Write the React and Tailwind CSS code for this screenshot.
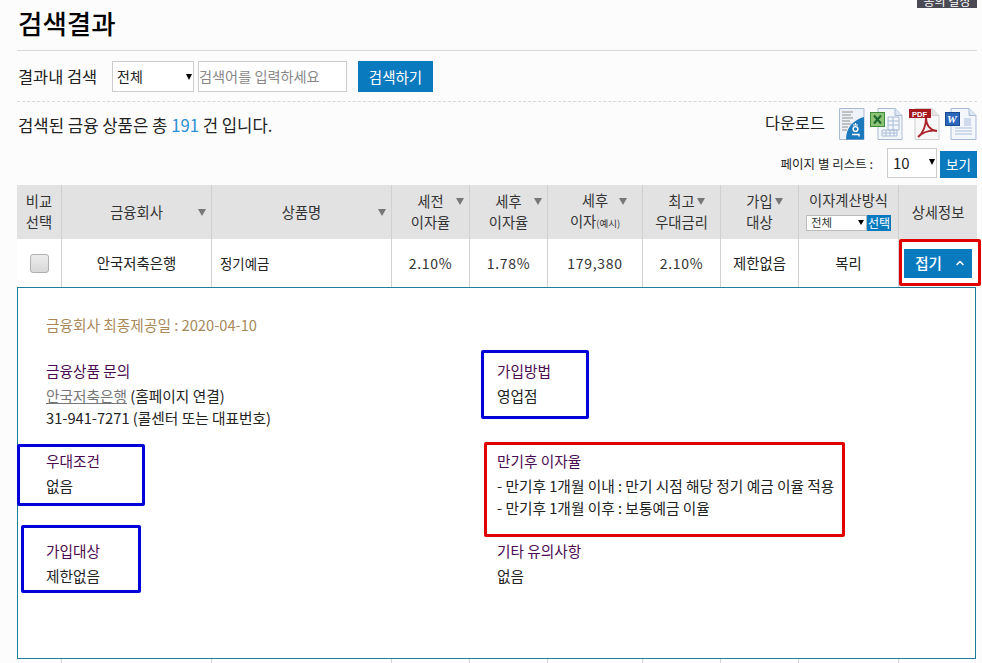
import { ChevronUp } from "lucide-react";

const cols = "grid-cols-[45px_150px_180px_78px_78px_95px_78px_78px_100px_78px]";

const SortArrow = ({ className = "" }) => (
  <span className={`inline-block w-0 h-0 border-x-[4px] border-x-transparent border-t-[7px] border-t-[#777] ${className}`} />
);

const HwpIcon = () => (
  <svg width="26" height="32" viewBox="0 0 26 32">
    <path d="M.5.5h24.5v31H.5z" fill="#eef2f8" stroke="#a9bbd4" />
    <path d="M3 4h11M3 7h9M3 10h11M3 13h8M3 16h9M3 19h6M3 22h5" stroke="#b0b0b0" strokeWidth="1.4" />
    <path d="M25 9v22.5H7C7 20 14 12 25 9z" fill="#1d79bd" />
    <path d="M14 17h5M16.5 15v2" stroke="#fff" strokeWidth="1.2" />
    <circle cx="16.5" cy="21" r="2.4" fill="none" stroke="#fff" strokeWidth="1.4" />
    <path d="M13 26.5h7v2" fill="none" stroke="#fff" strokeWidth="1.4" />
  </svg>
);

const XlsIcon = () => (
  <svg width="33" height="32" viewBox="0 0 33 32">
    <path d="M8 .5h17l7 7v24H8z" fill="#f3f6fb" stroke="#a9bbd4" />
    <path d="M25 .5v7h7" fill="#dbe5f3" stroke="#a9bbd4" />
    <path d="M12 22h15v6H12zM12 25h15M16 22v6M20 22v6M24 22v6M18 9h11v13H18zM18 13h11M18 17h11M23 9v13" fill="none" stroke="#a9bcd6" />
    <rect x=".5" y="4.5" width="14" height="14" fill="#8cc377" stroke="#3f8a3a" />
    <path d="M4 7.5l7 8M11 7.5l-7 8" stroke="#1f6a2c" strokeWidth="2.2" />
  </svg>
);

const PdfIcon = () => (
  <svg width="31" height="32" viewBox="0 0 31 32">
    <path d="M6 .5h17l7 7v24H6z" fill="#f8f8f8" stroke="#cfcfcf" />
    <path d="M23 .5v7h7" fill="#e4e4e4" stroke="#cfcfcf" />
    <path d="M9 29c5-4 8-12 8-20 0 7 3 13 11 14-7-1-14 1-19 6z" fill="none" stroke="#a8232a" strokeWidth="1.8" />
    <rect x="0" y="1" width="22" height="9" fill="#a5191f" />
    <text x="3" y="8.5" fontSize="7.5" fontWeight="700" fill="#fff" fontFamily="Liberation Sans, sans-serif">PDF</text>
  </svg>
);

const DocIcon = () => (
  <svg width="32" height="32" viewBox="0 0 32 32">
    <path d="M6 .5h18l7 7v24H6z" fill="#f3f6fb" stroke="#a9bbd4" />
    <path d="M24 .5v7h7" fill="#dbe5f3" stroke="#a9bbd4" />
    <path d="M19 10h7v8h-7z" fill="#cfdbec" />
    <path d="M10 20h17M10 23h17M10 26h17" stroke="#a9bfdc" />
    <rect x=".5" y="4.5" width="14" height="13" fill="#2b66bd" stroke="#1c4a90" />
    <text x="2" y="15" fontSize="11" fontWeight="700" fontStyle="italic" fill="#fff" fontFamily="Liberation Serif, serif">W</text>
  </svg>
);

const HeadCell = ({ children, arrow, arrowClass = "" }) => (
  <div className="relative flex items-center justify-center pb-[2px] text-center border-r border-[#d0d0d0] last:border-r-0 leading-[21px]">
    {children}
    {arrow && <SortArrow className={`absolute ${arrowClass}`} />}
  </div>
);

const Cell = ({ children, className = "" }) => (
  <div className={`flex items-center justify-center border-r border-[#d0d0d0] last:border-r-0 ${className}`}>
    {children}
  </div>
);

const Block = ({ title, children }) => (
  <div className="h-[90px]">
    <div className="h-[25px] leading-[27px] text-[#4b0b52]">{title}</div>
    <div className="leading-[21.5px] text-[#222] pt-[3px]">{children}</div>
  </div>
);

export default function App() {
  return (
    <div className="relative h-[663px] overflow-hidden bg-[#fcfcfc] pl-[17px] pr-[5px] text-[14px] text-[#222] font-['Noto_Sans_CJK_KR','Noto_Sans',sans-serif]">
      {/* top badge, cut by the window */}
      <div className="absolute right-[5px] top-0 h-[8px] w-[60px] overflow-hidden bg-[#4a4a55] text-center text-[12px] leading-[2px] text-white">
        동의 결정
      </div>

      <h1 className="h-[51px] border-b border-[#d8d8d8] pt-[4px] pl-[1px] text-[26.5px] font-medium leading-[38px] text-black">검색결과</h1>

      {/* search */}
      <div className="flex h-[51px] items-center border-b border-dashed border-[#d8d8d8] pt-[2px] pb-[1px] pl-[1px]">
        <span className="mr-[15px] w-[79px] text-[16.4px] whitespace-nowrap">결과내 검색</span>
        <div className="relative mr-[4px] flex h-[31px] w-[82px] items-center border border-[#ccc] bg-white pl-[4px] text-[14px]">
          전체
          <span className="absolute right-[1px] top-[12px] h-0 w-0 border-x-[3.5px] border-t-[6px] border-x-transparent border-t-black" />
        </div>
        <div className="flex h-[31px] w-[149px] items-center border border-[#ccc] bg-white text-[14.2px] text-[#888]">
          검색어를 입력하세요
        </div>
        <button className="ml-[11px] h-[31px] w-[75px] bg-[#0a7abf] text-[14.5px] text-white">검색하기</button>
      </div>

      {/* result count + downloads */}
      <div className="flex h-[42px] items-center justify-between">
        <div className="pt-[6px] pl-[1px] text-[16.7px]">
          검색된 금융 상품은 총 <span className="text-[#2a8fd6]">191</span> 건 입니다.
        </div>
        <div className="flex items-center">
          <span className="mr-[14px] mb-[2px] text-[16.3px]">다운로드</span>
          <div className="flex items-center pt-[2px]">
            <HwpIcon />
            <span className="w-[5px]" />
            <XlsIcon />
            <span className="w-[6px]" />
            <PdfIcon />
            <span className="w-[5px]" />
            <DocIcon />
          </div>
        </div>
      </div>

      {/* page size */}
      <div className="flex h-[41px] items-center justify-end pt-[4px] pb-[7px]">
        <span className="mr-[14px] mt-[3px] text-[12.5px]">페이지 별 리스트 :</span>
        <div className="relative mr-[3px] flex h-[30px] w-[50px] items-center border border-[#ccc] bg-white pl-[5px] text-[15px]">
          10
          <span className="absolute right-[1px] top-[10px] h-0 w-0 border-x-[3.5px] border-t-[6px] border-x-transparent border-t-black" />
        </div>
        <button className="h-[27px] w-[37px] self-end bg-[#0a7abf] text-[13.5px] text-white">보기</button>
      </div>

      {/* table head */}
      <div className={`grid h-[54px] ${cols} bg-[#e2e2e2] text-[14.3px] text-[#333]`}>
        <HeadCell><span>비교<br />선택</span></HeadCell>
        <HeadCell arrow arrowClass="right-[5px] top-[24px]"><span>금융회사</span></HeadCell>
        <HeadCell arrow arrowClass="right-[5px] top-[24px]"><span>상품명</span></HeadCell>
        <HeadCell arrow arrowClass="right-[5px] top-[13px]"><span>세전<br />이자율</span></HeadCell>
        <HeadCell arrow arrowClass="right-[5px] top-[13px]"><span>세후<br />이자율</span></HeadCell>
        <HeadCell arrow arrowClass="right-[15px] top-[13px]"><span>세후<br />이자<small className="text-[9.5px]">(예시)</small></span></HeadCell>
        <HeadCell arrow arrowClass="right-[15px] top-[13px]"><span>최고<br />우대금리</span></HeadCell>
        <HeadCell arrow arrowClass="right-[15px] top-[13px]"><span>가입<br />대상</span></HeadCell>
        <div className="flex flex-col items-center border-r border-[#d0d0d0] pt-[5px]">
          <span className="leading-[20px]">이자계산방식</span>
          <div className="mt-[5px] flex h-[16px] w-[85px] items-stretch">
            <div className="relative flex flex-1 items-center border border-[#bbb] bg-white pl-[4px] text-[11.5px]">
              전체
              <span className="absolute right-[2px] top-[4px] h-0 w-0 border-x-[3px] border-t-[5px] border-x-transparent border-t-black" />
            </div>
            <span className="flex w-[24px] items-center justify-center bg-[#0a7abf] text-[12px] text-white">선택</span>
          </div>
        </div>
        <HeadCell>상세정보</HeadCell>
      </div>

      {/* table row */}
      <div className={`grid h-[48px] ${cols} bg-white text-[14.4px] text-[#222]`}>
        <Cell>
          <span className="h-[19px] w-[19px] rounded-[3px] border border-[#b0b0b0] bg-gradient-to-b from-[#ececec] to-[#d8d8d8]" />
        </Cell>
        <Cell>안국저축은행</Cell>
        <Cell className="justify-start pl-[8px] text-[13.4px]">정기예금</Cell>
        <Cell className="text-[14px] tracking-[0.7px] text-[#333]">2.10%</Cell>
        <Cell className="text-[14px] tracking-[0.7px] text-[#333]">1.78%</Cell>
        <Cell className="text-[14px] tracking-[0.7px] text-[#333]">179,380</Cell>
        <Cell className="text-[14px] tracking-[0.7px] text-[#333]">2.10%</Cell>
        <Cell>제한없음</Cell>
        <Cell>복리</Cell>
        <Cell>
          <button className="flex h-[29px] w-[68px] items-center justify-center gap-[12px] bg-[#0a7abf] pl-[5px] text-[14.5px] font-medium text-white">
            접기
            <ChevronUp size={12} strokeWidth={3} />
          </button>
        </Cell>
      </div>

      {/* expanded detail */}
      <div className="relative mr-[1px] h-[372px] border border-[#1c7e98] bg-white px-[28px] pt-[27px] text-[14.7px]">
        <div className="h-[42px] leading-[20px] text-[#a9895a] whitespace-nowrap">금융회사 최종제공일 : 2020-04-10</div>
        <div className="grid grid-cols-[451px_1fr]">
          <Block title="금융상품 문의">
            <span className="text-[#777] underline">안국저축은행</span> (홈페이지 연결)<br />
            31-941-7271 (콜센터 또는 대표번호)
          </Block>
          <Block title="가입방법">영업점</Block>
          <Block title="우대조건">없음</Block>
          <Block title="만기후 이자율">
            - 만기후 1개월 이내 : 만기 시점 해당 정기 예금 이율 적용<br />
            - 만기후 1개월 이후 : 보통예금 이율
          </Block>
          <Block title="가입대상">제한없음</Block>
          <Block title="기타 유의사항">없음</Block>
        </div>

        {/* review annotations drawn over the page */}
        <div className="absolute left-[-1px] top-[156px] h-[62px] w-[128px] rounded-[2px] border-[3px] border-[#0000d8]" />
        <div className="absolute left-[3px] top-[237px] h-[68px] w-[120px] rounded-[2px] border-[3px] border-[#0000d8]" />
        <div className="absolute left-[463px] top-[62px] h-[69px] w-[108px] rounded-[2px] border-[3px] border-[#0000d8]" />
        <div className="absolute left-[466px] top-[154px] h-[95px] w-[361px] rounded-[2px] border-[3px] border-[#e00000]" />
      </div>

      {/* next row, cut by the window */}
      <div className={`grid h-[4px] ${cols} bg-white`}>
        {Array.from({ length: 10 }).map((_, i) => (
          <div key={i} className="border-r border-[#d0d0d0] last:border-r-0" />
        ))}
      </div>

      {/* annotation around the collapse button */}
      <div className="absolute left-[899px] top-[239px] h-[47px] w-[82px] rounded-[2px] border-[3px] border-[#e00000]" />
    </div>
  );
}
